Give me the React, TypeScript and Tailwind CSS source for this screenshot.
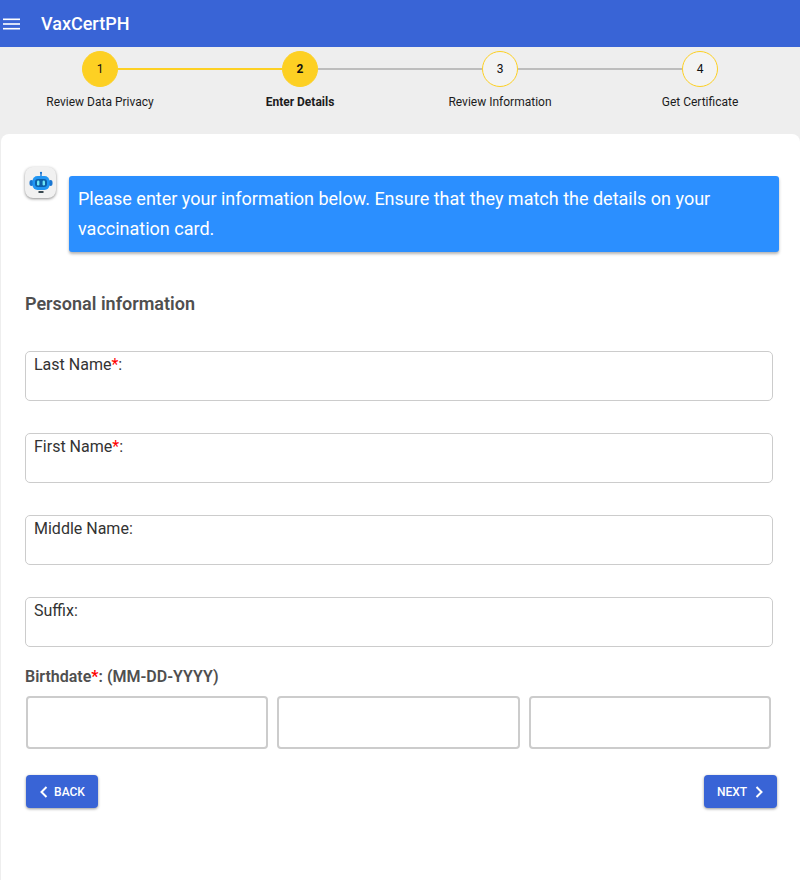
const font = "[font-family:Roboto,sans-serif]";

const steps = [
  { n: 1, label: "Review Data Privacy", done: true },
  { n: 2, label: "Enter Details", done: true, active: true },
  { n: 3, label: "Review Information", done: false },
  { n: 4, label: "Get Certificate", done: false },
];

function Stepper() {
  return (
    <div className="grid grid-cols-4 h-[87px] bg-[#eeeeee] pt-1">
      {steps.map((s, i) => (
        <div key={s.n} className="relative flex flex-col items-center">
          {i > 0 && (
            <div
              className={`absolute top-[17px] h-0.5 left-[calc(-50%+18px)] right-[calc(50%+18px)] ${
                s.done ? "bg-[#fdd023]" : "bg-[#bdbdbd]"
              }`}
            />
          )}
          <div
            className={`flex h-9 w-9 items-center justify-center rounded-full border border-[#fdd023] text-xs text-[#111] ${
              s.done ? "bg-[#fdd023]" : "bg-[#f3f3f3]"
            } ${s.active ? "font-bold" : ""}`}
          >
            {s.n}
          </div>
          <div className={`mt-[6px] text-xs leading-[19px] text-[#1c1c1c] ${s.active ? "font-bold" : ""}`}>
            {s.label}
          </div>
        </div>
      ))}
    </div>
  );
}

function RobotIcon() {
  return (
    <svg width="24" height="24" viewBox="0 0 24 24">
      <rect x="11.3" y="1" width="1.4" height="4" fill="#1976d2" />
      <circle cx="12" cy="1.8" r="1.1" fill="#1976d2" />
      <rect x="0.5" y="9" width="4" height="6" rx="2" fill="#1976d2" />
      <rect x="19.5" y="9" width="4" height="6" rx="2" fill="#1976d2" />
      <rect x="3.5" y="5" width="17" height="14" rx="5" fill="#2196f3" />
      <rect x="6" y="8" width="12" height="8" rx="3" fill="#0d5fa8" />
      <rect x="8" y="9.5" width="2.4" height="5" rx="1.2" fill="#6fe6f5" />
      <rect x="13.6" y="9.5" width="2.4" height="5" rx="1.2" fill="#6fe6f5" />
      <rect x="9.5" y="20" width="5" height="2" fill="#37474f" />
    </svg>
  );
}

function TextField({ label, required }: { label: string; required?: boolean }) {
  return (
    <div className="h-[50px] w-[748px] rounded-[5px] border border-[#cccccc] bg-white pl-2 pt-[3px]">
      <div className="text-base leading-[20px] text-[#333333]">
        {label}
        {required && <span className="text-[#ff0000]">*</span>}:
      </div>
    </div>
  );
}

function Chevron({ dir }: { dir: "left" | "right" }) {
  return (
    <svg width="10" height="14" viewBox="0 0 10 14" fill="none" stroke="currentColor" strokeWidth="2">
      <path d={dir === "left" ? "M7.5 2 L2.5 7 L7.5 12" : "M2.5 2 L7.5 7 L2.5 12"} />
    </svg>
  );
}

export default function App() {
  return (
    <div className={`${font} h-[880px] w-[800px] overflow-hidden bg-[#eeeeee]`}>
      <header className="flex h-[47px] items-center bg-[#3964d6] text-white">
        <svg className="ml-[3px]" width="17" height="12" viewBox="0 0 17 12" fill="#fff">
          <rect y="0.5" width="17" height="1.6" />
          <rect y="5.2" width="17" height="1.6" />
          <rect y="9.9" width="17" height="1.6" />
        </svg>
        <div className="ml-[21px] text-lg font-medium leading-none">VaxCertPH</div>
      </header>
      <Stepper />
      <main className="ml-px h-[746px] rounded-t-lg bg-white pl-6 pt-[33px]">
        <div className="flex items-start">
          <div className="flex h-[31px] w-[31px] shrink-0 items-center justify-center rounded-lg bg-[#f1f1f1] shadow-[0_1px_3px_rgba(0,0,0,0.45)]">
            <RobotIcon />
          </div>
          <div className="ml-[13px] mt-[9px] w-[710px] rounded-[3px] bg-[#2b8fff] px-[9px] py-2 text-lg leading-[30px] text-white shadow-[0_2px_3px_rgba(0,0,0,0.3)]">
            Please enter your information below. Ensure that they match the details on your vaccination card.
          </div>
        </div>
        <h2 className="mt-[41px] text-lg font-semibold leading-[21px] text-[#4f4f4f]">Personal information</h2>
        <div className="mt-[37px] flex flex-col gap-8">
          <TextField label="Last Name" required />
          <TextField label="First Name" required />
          <TextField label="Middle Name" />
          <TextField label="Suffix" />
        </div>
        <div className="mt-5 text-base font-semibold leading-5 text-[#4f4f4f]">
          Birthdate<span className="text-[#ff0000]">*</span>: (MM-DD-YYYY)
        </div>
        <div className="ml-px mt-[9px] flex w-[745px] gap-[9px]">
          {[0, 1, 2].map((i) => (
            <div key={i} className="h-[53px] flex-1 rounded-[4px] border-2 border-[#cccccc]" />
          ))}
        </div>
        <div className="ml-px mt-[26px] flex w-[751px] justify-between">
          <button className="flex h-[33px] w-[72px] items-center justify-center gap-[5px] rounded-[4px] bg-[#3964d6] text-xs font-medium text-white shadow-[0_1px_3px_rgba(0,0,0,0.4)]">
            <Chevron dir="left" />
            BACK
          </button>
          <button className="flex h-[33px] w-[73px] items-center justify-center gap-[7px] rounded-[4px] bg-[#3964d6] text-xs font-medium text-white shadow-[0_1px_3px_rgba(0,0,0,0.4)]">
            NEXT
            <Chevron dir="right" />
          </button>
        </div>
      </main>
    </div>
  );
}
